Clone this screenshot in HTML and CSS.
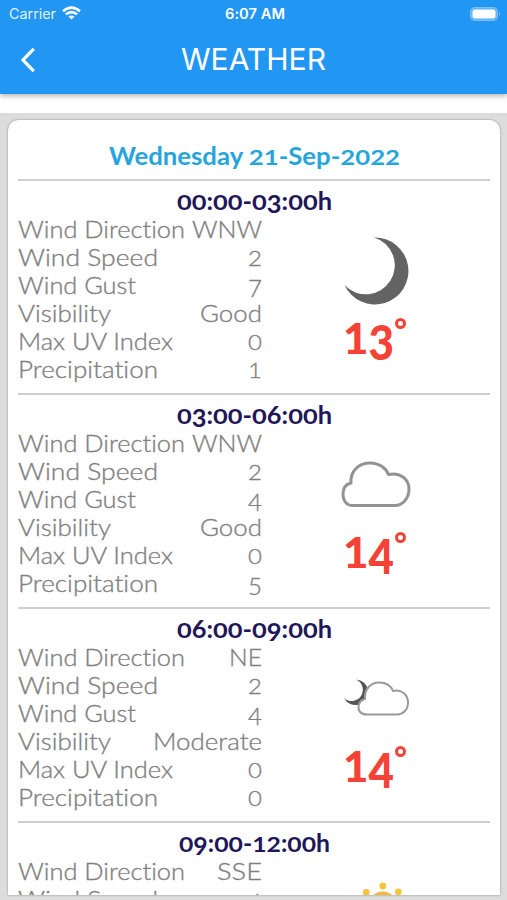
FILE: index.html
```html
<!DOCTYPE html>
<html lang="en">
<head>
<meta charset="utf-8">
<title>Weather</title>
<link rel="stylesheet" href="styles.css">
</head>
<body>
<header class="bar">
  <div class="status">
    <span class="carrier"><span data-fit="47">Carrier</span>
      <svg width="19" height="14" viewBox="0 0 19 14"><g fill="none" stroke="#fff" stroke-width="2.5"><path d="M1 5.200Q9.5-2 18 5.200"/><path d="M3.800 8.400Q9.5 3.800 15.200 8.400"/></g><path fill="#fff" d="M6.400 10.600Q9.5 8.200 12.600 10.600L9.5 13.600Z"/></svg>
    </span>
    <span class="clock"><span data-fit="60">6:07 AM</span></span>
    <svg class="battery" width="31" height="14" viewBox="0 0 31 14"><rect x=".7" y=".7" width="26.6" height="12.6" rx="4" fill="#59b0f8" stroke="#7cc1fa" stroke-width="1.2"/><rect x="2.5" y="2.5" width="23" height="9" rx="2.2" fill="#fff"/><path d="M29 5q2 2 0 4z" fill="#8cc8fa"/></svg>
  </div>
  <div class="nav">
    <svg class="back" width="18" height="26" viewBox="0 0 18 26"><path d="M15.800 1.800L5 13L15.800 24.200" fill="none" stroke="#fff" stroke-width="3.2"/></svg>
    <h1><span data-fit="145">WEATHER</span></h1>
  </div>
</header>
<main class="page">
  <article class="card">
    <h2><span class="num" data-fit="291">Wednesday 21-Sep-2022</span></h2>
    <div id="periods"></div>
  </article>
</main>
<svg class="defs" width="0" height="0">
  <symbol id="moon" viewBox="0 0 110 75"><path fill="#636363" d="M54 4.500A33.500 33.500 0 1 1 24.500 52A29 29 0 1 0 54 4.500Z"/></symbol>
  <symbol id="cloud" viewBox="0 0 110 75"><path fill="#fff" stroke="#939393" stroke-width="3" stroke-linejoin="round" d="M33 58.500C26 58.500 23 53 23 47.500C23 41 26 37 31 36C30 24 39 16 50 16C59 16 66 21 68.500 27.500C80 25 89 32 89 42C89 52 82 58.500 75 58.500Z"/></symbol>
  <symbol id="mooncloud" viewBox="0 0 110 75"><path fill="#555" d="M36 18.500A12.800 12.800 0 1 1 24 37A11.200 11.200 0 1 0 36 18.500Z"/><path fill="#fff" stroke="#999" stroke-width="2" stroke-linejoin="round" d="M47 53.500C40 53.500 38 49 38.500 45C39 41 41 39 45 38C44 28 51 21.500 59 21.500C66 21.500 71 25 73 30C82 28 88 34 88 41.500C88 49 83 53.500 77 53.500Z"/></symbol>
  <symbol id="sun" viewBox="0 0 110 75"><g fill="#f3c53b"><circle cx="62.800" cy="11" r="3.400"/><circle cx="46.300" cy="17.500" r="3.400"/><circle cx="78.300" cy="16.800" r="3.400"/></g><circle cx="62.800" cy="31" r="12.500" fill="none" stroke="#f3b83b" stroke-width="4"/></symbol>
</svg>
<script src="app.js"></script>
</body>
</html>
```
FILE: styles.css
```css
* { box-sizing: border-box; }
body {
  margin: 0;
  height: 900px;
  overflow: hidden;
  display: flex;
  flex-direction: column;
  background: #fff;
  font-family: Lato, "Open Sans", sans-serif;
  font-variant-ligatures: none;
}
[data-fit] { display: inline-block; white-space: pre; transform-origin: 0 50%; }
.defs { display: none; }
.bar {
  flex: none;
  height: 94px;
  background: #2196f3;
  color: #fff;
  font-family: Inter, Roboto, sans-serif;
  box-shadow: 0 2px 5px rgba(0, 0, 0, .3);
}
.status {
  height: 27px;
  padding: 0 6px 0 9px;
  display: grid;
  grid-template-columns: 1fr auto 1fr;
  align-items: center;
  font-size: 14px;
}
.carrier { display: flex; align-items: center; gap: 6px; color: #e3f2fe; }
.carrier svg { margin-top: -1px; }
.clock { font-weight: 600; }
.battery { justify-self: end; }
.nav {
  height: 65px;
  padding: 0 18px;
  display: grid;
  grid-template-columns: 18px 1fr 18px;
  align-items: center;
}
h1 { margin: 0; text-align: center; font-size: 30px; font-weight: 400; line-height: 65px; }
.page {
  flex: none;
  height: 787px;
  margin-top: 19px;
  padding: 7px 7px 5px 8px;
  background: #dcdcdc;
}
.card {
  height: 775px;
  overflow: hidden;
  padding: 0 10px;
  background: #fff;
  border-radius: 10px 10px 0 0;
  box-shadow: 0 0 2px rgba(0, 0, 0, .45);
}
h2 {
  margin: 0;
  height: 59px;
  padding-top: 20px;
  text-align: center;
  line-height: 32px;
  font-size: 24px;
  font-weight: 700;
  color: #26a5dc;
}
.period { height: 214px; border-top: 2px solid #cfcfcf; padding-top: 6px; }
h3 {
  margin: 0;
  height: 28px;
  line-height: 28px;
  text-align: center;
  font-size: 24px;
  font-weight: 700;
  color: #211658;
}
.body { display: grid; grid-template-columns: 244px 1fr; }
.row {
  height: 28px;
  display: flex;
  justify-content: space-between;
  font-size: 24px;
  line-height: 28px;
  font-weight: 300;
  color: #808080;
  -webkit-text-stroke: .35px #808080;
}
.sky { display: flex; flex-direction: column; padding-left: 58px; }
.sky svg { width: 110px; height: 75px; margin-top: 18px; }
.temp {
  height: 50px;
  margin-top: 4px;
  padding-left: 23px;
  display: flex;
  align-items: flex-start;
  font-size: 47px;
  line-height: 48px;
  font-weight: 900;
  color: #f44336;
}
.degree { width: 11px; height: 11px; margin: 6px 0 0 1px; border: 3px solid #f44336; border-radius: 50%; }
.low { display: inline-block; line-height: 1; transform-origin: 50% 81%; transform: scaleY(.88); }
.drop { position: relative; top: .12em; }
```
FILE: app.js
```js
const widths = {
  "Wind Direction": 167, "Wind Speed": 140, "Wind Gust": 118, "Visibility": 93,
  "Max UV Index": 155, "Precipitation": 140,
  WNW: 70, Good: 62, NE: 33, Moderate: 109, SSE: 45
};
const labels = ["Wind Direction", "Wind Speed", "Wind Gust", "Visibility", "Max UV Index", "Precipitation"];
const periods = [
  ["00:00-03:00h", 155, ["WNW", "2", "7", "Good", "0", "1"], "moon", "13"],
  ["03:00-06:00h", 155, ["WNW", "2", "4", "Good", "0", "5"], "cloud", "14"],
  ["06:00-09:00h", 155, ["NE", "2", "4", "Moderate", "0", "0"], "mooncloud", "14"],
  ["09:00-12:00h", 151, ["SSE", "4", "4", "Good", "1", "0"], "sun", "15"]
];
const fitted = (text, w) => `<span class="num" data-fit="${w || 14}">${text}</span>`;
document.getElementById("periods").innerHTML = periods.map(([time, w, values, icon, temp]) => `
  <section class="period">
    <h3>${fitted(time, w)}</h3>
    <div class="body">
      <div>${labels.map((l, i) => `<div class="row">${fitted(l, widths[l])}${fitted(values[i], widths[values[i]])}</div>`).join("")}</div>
      <div class="sky"><svg><use href="#${icon}"/></svg>
        <div class="temp">${fitted(temp, 51)}<span class="degree"></span></div>
      </div>
    </div>
  </section>`).join("");

// Old-style numerals: 0, 1, 2 sit low; 3, 4, 5, 7, 9 hang below the baseline.
document.querySelectorAll(".num").forEach(el => {
  el.innerHTML = el.textContent
    .replace(/[0-9]/g, d => "012".includes(d) ? `<span class="low">${d}</span>`
      : "34579".includes(d) ? `<span class="drop">${d}</span>` : d);
});
// Stretch each text so that it fills its set width.
document.querySelectorAll("[data-fit]").forEach(el => {
  if (el.textContent.length < 2) return;
  const natural = el.getBoundingClientRect().width;
  const target = Number(el.dataset.fit);
  el.style.transform = `scaleX(${target / natural})`;
  el.style.marginRight = target - natural + "px";
});
```
